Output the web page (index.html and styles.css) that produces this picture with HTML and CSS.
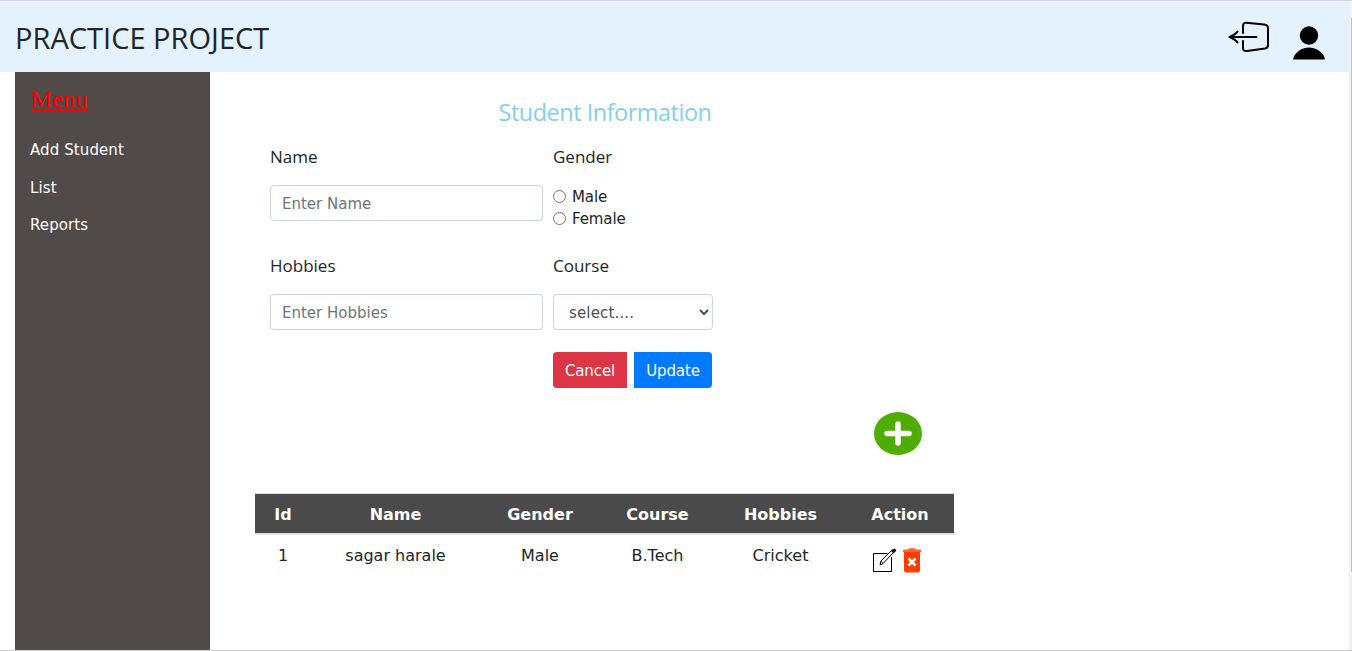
FILE: index.html
```html
<!DOCTYPE html>
<html lang="en">
<head>
<meta charset="utf-8">
<title>Practice Project</title>
<link rel="stylesheet" href="styles.css">
</head>
<body>
<div class="page">
  <div class="view">
    <header class="topbar">
      <h1 class="brand">PRACTICE PROJECT</h1>
      <div class="tools">
        <svg class="logout" width="42" height="32" viewBox="0 0 42 32" fill="none" stroke="#000" stroke-width="2" stroke-linecap="round" stroke-linejoin="round">
          <path d="M15 12V5Q15 1.500 18.500 1.800L36 3.500Q40 4 40 7V24Q40 27 37 27.500L19 30Q15 30.500 15 27V20"/>
          <path d="M28.500 16H1.500M9.500 10.500C8 13 5 14.500 1.500 16C5 17.500 8 19 9.500 21.500"/>
        </svg>
        <svg class="user" width="32" height="34" viewBox="0 0 32 34"><circle cx="16" cy="9.500" r="9.200"/><path d="M.2 33.500Q0 31 2 28.500Q7.500 21.500 16 21.500T30 28.500Q32 31 31.800 33.500Z"/></svg>
      </div>
    </header>
    <div class="body">
      <nav class="sidebar">
        <h2 class="menu-title">Menu</h2>
        <a class="link">Add Student</a>
        <a class="link">List</a>
        <a class="link">Reports</a>
      </nav>
      <main class="content">
        <h2 class="form-title">Student Information</h2>
        <form class="form">
          <div class="field">
            <label class="label">Name</label>
            <input class="control" type="text" placeholder="Enter Name">
          </div>
          <div class="field">
            <label class="label">Gender</label>
            <div class="radios">
              <label class="radio"><input type="radio" name="gender"><span>Male</span></label>
              <label class="radio"><input type="radio" name="gender"><span>Female</span></label>
            </div>
          </div>
          <div class="field">
            <label class="label">Hobbies</label>
            <input class="control" type="text" placeholder="Enter Hobbies">
          </div>
          <div class="field">
            <label class="label">Course</label>
            <select class="control select"><option>select....</option></select>
          </div>
          <div class="buttons">
            <button class="btn cancel" type="button">Cancel</button>
            <button class="btn update" type="button">Update</button>
          </div>
        </form>
        <div class="add-row">
          <svg width="48" height="43" viewBox="0 0 48 43"><ellipse cx="24" cy="21.500" rx="24" ry="21.400" fill="#4fac00"/><path d="M24 12V31M13 21.500H35" stroke="#fff" stroke-width="5.500" stroke-linecap="round"/></svg>
        </div>
        <table class="table">
          <colgroup><col class="c-id"><col class="c-name"><col class="c-gender"><col class="c-course"><col class="c-hobbies"><col class="c-action"></colgroup>
          <thead><tr><th>Id</th><th>Name</th><th>Gender</th><th>Course</th><th>Hobbies</th><th>Action</th></tr></thead>
          <tbody><tr><td>1</td><td>sagar harale</td><td>Male</td><td>B.Tech</td><td>Cricket</td>
            <td><div class="actions">
              <svg width="24" height="25" viewBox="0 0 24 25" fill="none" stroke="#000"><path d="M14.500 5.500H.5V23.500H18.500V9"/><path d="M7 17L8 13L18.500 2.500L20.500 4.500L10 15.500Z" fill="#fff"/><path d="M8 13L10 15.500" stroke-width=".7"/><path d="M18.500 2.800L20 1.500Q21.500.6 22.600 1.800Q23 3 21.800 3.800L20.500 5Z" fill="#000"/></svg>
              <svg width="18" height="25" viewBox="0 0 18 25"><path d="M1 4H17V22Q17 24.500 14.500 24.500H3.500Q1 24.500 1 22Z" fill="#ff3d00"/><path d="M0 4V2.500Q0 1.500 1 1.500H5L6 .3H12L13 1.500H17Q18 1.500 18 2.500V4Z" fill="#ff6036"/><path d="M5.500 10.500L12.500 17.500M12.500 10.500L5.500 17.500" stroke="#fff" stroke-width="2.600"/></svg>
            </div></td></tr></tbody>
        </table>
      </main>
    </div>
  </div>
  <div class="scroll"><div class="thumb"></div></div>
</div>
</body>
</html>
```

FILE: styles.css
```css
* { box-sizing: border-box; }
body { margin: 0; background: #fff; color: #212529; font-family: "DejaVu Sans", Verdana, sans-serif; font-size: 15px; }
h1, h2 { margin: 0; font-weight: 400; }
.page { display: flex; width: 1352px; height: 651px; overflow: hidden; border-top: 1px solid #d6dade; border-bottom: 1px solid #c8c8c8; }
.view { flex: 1; display: flex; flex-direction: column; }
.scroll { width: 3px; padding: 17px 0 0 2px; background: #f1f1f1; }
.thumb { height: 554px; background: #c1c1c1; }
.topbar { display: flex; justify-content: space-between; height: 71px; padding: 0 24px 0 15px; background: #e3f2fd; }
.brand { font: 400 29px/74px "Open Sans", sans-serif; letter-spacing: .02px; white-space: nowrap; }
.tools { display: flex; gap: 23px; align-items: flex-start; padding-top: 20px; }
.user { margin-top: 5px; }
.body { flex: 1; display: flex; padding-left: 15px; }
.sidebar { width: 195px; padding: 9px 15px; background: #504a49; color: #fff; }
.menu-title { padding-left: 1px; font: 24px/36px "Liberation Serif", serif; letter-spacing: .3px; color: #f00; text-decoration: underline; text-underline-offset: 2px; margin-bottom: 15px; }
.link { display: block; height: 37.5px; line-height: 37.5px; letter-spacing: .1px; }
.content { width: 744px; padding: 23px 0 0 45px; }
.form-title { width: 700px; text-align: center; font: 23.5px/34px "Open Sans", sans-serif; letter-spacing: -.5px; color: #87ceeb; }
.form { display: grid; grid-template-columns: 273px 160px; column-gap: 10px; padding: 12px 0 0 15px; grid-template-rows: 109px 102px 36px; }
.field { display: flex; flex-direction: column; }
.label { height: 44px; font: 17px/31px "Open Sans", sans-serif; }
.control { width: 100%; height: 36px; padding: 2px 11px 0; border: 1px solid #ced4da; border-radius: 4px; background: #fff; font: 15px "DejaVu Sans", sans-serif; color: #495057; }
.select { letter-spacing: .15px; }
.control::placeholder { color: #6c757d; opacity: 1; }
.radio { display: flex; align-items: center; height: 22px; letter-spacing: -.1px; }
.radio input { width: 13px; height: 13px; margin: 0 6px 0 0; }
.radio span { padding-top: 1px; }
.buttons { grid-column: 2; display: flex; gap: 7px; }
.btn { height: 36px; padding: 1px 0 0; border: 0; color: #fff; font: 15px "DejaVu Sans", sans-serif; letter-spacing: -.1px; }
.cancel { width: 74px; background: #dc3545; border-radius: 4px 0 0 4px; }
.update { width: 78px; background: #007bff; border-radius: 0 4px 4px 0; }
.add-row { height: 105px; padding: 24px 32px 0 0; display: flex; justify-content: flex-end; align-items: flex-start; }
.table { width: 699px; table-layout: fixed; border-collapse: separate; border-spacing: 0; text-align: center; border-top: 1px solid #dee2e6; font-size: 16px; }
.table th { height: 41px; padding: 1px 0 0; background: #4a4a4a; color: #fff; border-bottom: 2px solid #dee2e6; font-weight: 700; }
.table td { height: 42px; padding: 0 0 2px; }
.c-id { width: 56px; } .c-name { width: 169px; } .c-gender { width: 120px; } .c-course { width: 115px; } .c-hobbies { width: 131px; } .c-action { width: 108px; }
.actions { display: flex; gap: 6px; justify-content: center; padding: 10px 6px 0 0; }
```
